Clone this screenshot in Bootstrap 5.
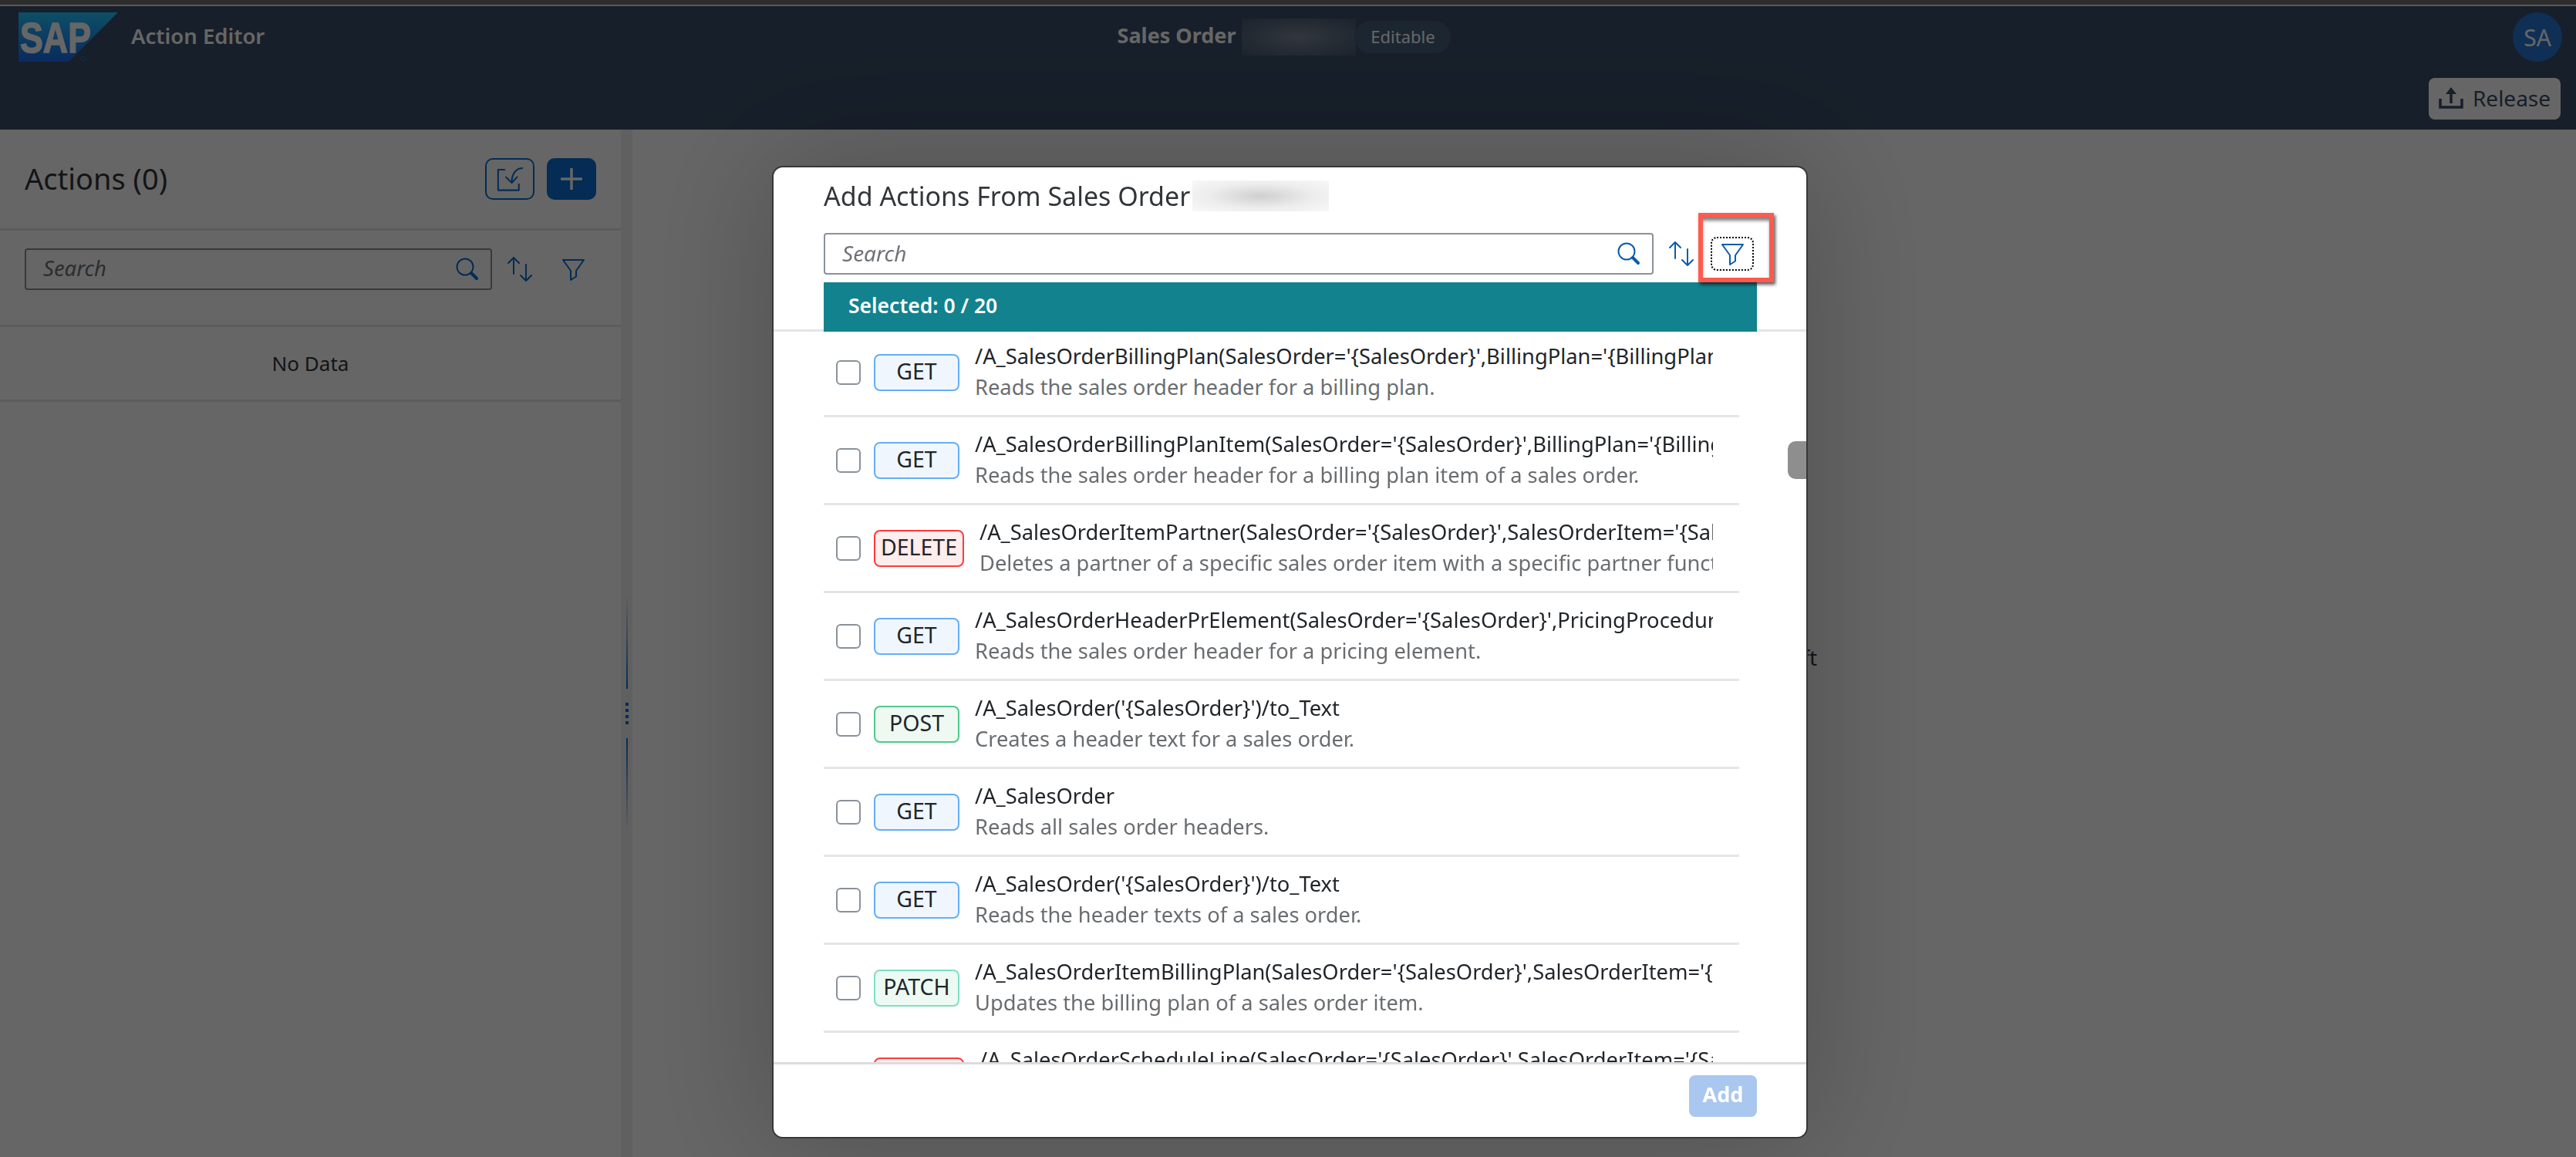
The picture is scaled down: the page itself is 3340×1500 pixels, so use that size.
<!DOCTYPE html>
<html>
  <head>
    <title>Action Editor</title>
    <link href="https://cdn.jsdelivr.net/npm/bootstrap@5.3.0/dist/css/bootstrap.min.css" rel="stylesheet" />
    <style>
      html, body { height: 100%; }
      body { font-family: "Noto Sans", "Liberation Sans", sans-serif; color: #32363a; overflow: hidden; background: #fff; }
      .top-strip { height: 8px; background: #707070; border-bottom: 2px solid #e0e0e0; }
      .shell-head { height: 160px; background: #3a4e69; color: #fff; padding: 8px 20px 0 24px; }
      .head-side { flex: 1 1 0; }
      .app-name { font-size: 27.500px; font-weight: 600; margin-left: 17px; padding-bottom: 3px; }
      .order-name { font-size: 27px; font-weight: 700; padding-bottom: 3px; }
      .head-mid { margin-right: 14px; }
      .blur-dark { width: 148px; height: 48px; margin: 0 -2px 0 8px; background: radial-gradient(ellipse at center, #7f8a98 0%, #5a6a80 60%, #45586f 100%); }
      .state-pill { height: 42px; width: 125px; border-radius: 21px; background: #485f7a; font-size: 22px; padding-bottom: 2px; }
      .avatar { width: 64px; height: 64px; background: #2676d4; font-size: 30px; margin-right: -2px; }
      .release-btn { width: 171px; height: 54px; margin-top: 21px; background: #fff; color: #3a4e69; font-size: 28px; padding: 0 0 3px; border: 0; border-radius: 8px; gap: 12px; }
      .release-btn:hover { background: #fff; color: #3a4e69; }

      .work-row { height: 1332px; }
      .side-pane { width: 805px; flex: none; }
      .pane-title { height: 131px; padding: 0 32px; border-bottom: 3px solid #e5e5e5; }
      .pane-title h2 { font-size: 38px; font-weight: 400; margin: 0; }
      .tool-btn { width: 64px; height: 54px; padding: 0; border: 2px solid #0a6ed1; border-radius: 10px; color: #0a6ed1; background: #fff; }
      .tool-btn-solid { background: #0a6ed1; border-color: #0a6ed1; color: #fff; }
      .pane-tools { height: 125px; padding: 23px 32px 0; border-bottom: 3px solid #e5e5e5; }
      .find-box { height: 54px; border: 2px solid #89919a; border-radius: 4px; background: #fff; padding: 0 15px 0 22px; }
      .find-box input { border: 0; outline: 0; flex: 1; min-width: 0; font-size: 27.500px; font-style: italic; background: transparent; padding: 0 0 3px; }
      .find-box input::placeholder { color: #6f7276; opacity: 1; }
      .blue-ico { color: #0a6ed1; flex: none; }
      .no-data { height: 97px; border-bottom: 3px solid #e5e5e5; font-size: 26px; }

      .split-bar { width: 15px; flex: none; background: #f0f1f2; padding-top: 602px; }
      .split-line { width: 2px; height: 123px; background: linear-gradient(to bottom, rgba(10,110,209,0), #0a6ed1); }
      .split-line-low { background: linear-gradient(to top, rgba(10,110,209,0), #0a6ed1); }
      .split-dots { gap: 4px; margin: 18px 0; }
      .split-dots i { display: block; width: 4px; height: 4px; background: #0a6ed1; }
      .center-note { font-size: 28px; padding-top: 36px; }
      .center-note span { width: 552px; text-align: right; white-space: nowrap; overflow: hidden; }

      .dim-layer { position: fixed; inset: 0; background: rgba(0, 0, 0, .6); }
      .act-dialog { position: fixed; left: 1003px; top: 217px; width: 1339px; height: 1257px; border-radius: 12px; background: #fff; overflow: hidden; box-shadow: 0 0 0 2px #383838; }
      .dialog-glow { position: fixed; left: 1003px; top: 217px; width: 1339px; height: 1257px; border-radius: 12px; box-shadow: 0 0 170px 10px rgba(0, 0, 0, .22); }
      .dialog-head { height: 213px; padding: 13px 64px 0 65px; border-bottom: 3px solid #e5e5e5; flex: none; }
      .dialog-head h3 { font-size: 34px; font-weight: 400; line-height: 48px; margin: 0; }
      .blur-light { width: 177px; height: 40px; margin-left: 3px; background: radial-gradient(ellipse at center, #cfcfcf 0%, #ededed 55%, #f8f8f8 100%); }
      .dialog-tools { margin-top: 24px; height: 54px; }
      .dialog-tools .find-box { flex: 1; padding: 0 15px 0 22px; }
      .dialog-tools input { font-size: 28px; }
      .funnel-focus { width: 56px; height: 44px; margin: 0 4px 0 21px; border: 2px dotted #000; border-radius: 8px; padding: 0; background: #fff; color: #0b5cab; }
      .sum-bar { height: 64px; margin-top: 10px; background: #12828f; color: #fff; font-size: 26.500px; font-weight: 600; padding: 0 0 3px 32px; margin-bottom: -3px; position: relative; }
      .list-wrap { flex: 1; min-height: 0; overflow: hidden; padding: 0 87px 0 65px; }
      .act-rows { margin-top: -3px; }
      .act-row { height: 114px; padding: 0 34px 0 16px; border: 0; border-bottom: 3px solid #e5e5e5; border-radius: 0; gap: 17px; flex: none; }
      .act-row .form-check-input { width: 32px; height: 32px; margin: 0; border: 2px solid #89919a; border-radius: 6px; flex: none; }
      .verb { width: 111px; height: 48px; flex: none; border: 2px solid; border-radius: 8px; font-size: 28.500px; margin-right: 3px; padding-bottom: 2px; }
      .verb-get { background: #f0f6fe; border-color: #64aef8; }
      .verb-post { background: #eef9f2; border-color: #4fc98a; }
      .verb-patch { background: #ecfaf3; border-color: #7fdfc0; }
      .verb-delete { width: 117px; background: #ffecec; border-color: #ff3b3b; }
      .act-text { min-width: 0; flex: 1; white-space: nowrap; overflow: hidden; }
      .act-path { font-size: 27.300px; line-height: 40px; margin-top: -2px; }
      .act-desc { font-size: 27.300px; line-height: 40px; color: #6a6d70; }
      .thumb { position: absolute; right: 0; top: 355px; width: 24px; height: 49px; background: #8e8e8e; border-radius: 10px 0 0 10px; }
      .dialog-foot { height: 97px; padding: 14px 64px 0 0; border-top: 3px solid #dcdcdc; flex: none; }
      .add-btn { width: 88px; height: 54px; padding: 0 0 3px; border: 0; border-radius: 8px; background: #a9c7ef; color: #fff; font-size: 27px; font-weight: 700; }
      .note-frame { position: absolute; left: 1199px; top: 59px; width: 98px; height: 90px; border: 6px solid #ff5a4f; box-shadow: 2px 3px 4px rgba(0, 0, 0, .65), inset 0 5px 4px -1px rgba(0, 0, 0, .5); }
    </style>
  </head>
  <body>
    <svg width="0" height="0" class="position-absolute">
      <symbol id="ico-search" viewBox="0 0 30 30"><circle cx="12" cy="12" r="10.5" fill="none" stroke="currentColor" stroke-width="2" /><path d="M20 20l7 7" stroke="currentColor" stroke-width="4" stroke-linecap="round" /></symbol>
      <symbol id="ico-sort" viewBox="0 0 34 34"><path d="M9 23V2M2 9l7-7 7 7M25 11v21M18 25l7 7 7-7" fill="none" stroke="currentColor" stroke-width="2" stroke-linecap="round" stroke-linejoin="round" /></symbol>
      <symbol id="ico-filter" viewBox="0 0 30 30"><path d="M2 3h27L19 17v7.500l-7 4.500V17z" fill="none" stroke="currentColor" stroke-width="2" stroke-linejoin="round" /></symbol>
    </svg>

    <div class="top-strip"></div>
    <header class="shell-head">
      <div class="d-flex align-items-center">
        <div class="head-side d-flex align-items-center">
          <svg width="129" height="64" viewBox="0 0 129 64">
            <defs><linearGradient id="sapFill" x1="0" y1="0" x2="0" y2="1"><stop offset="0" stop-color="#23c5ff" /><stop offset="1" stop-color="#196beb" /></linearGradient></defs>
            <polygon points="0,0 129,0 65,64 0,64" fill="url(#sapFill)" />
            <text x="2" y="52" font-family="Liberation Sans" font-weight="700" font-size="56" textLength="92" lengthAdjust="spacingAndGlyphs" fill="#fff" stroke="#fff" stroke-width="1.500">SAP</text>
            <circle cx="84" cy="60" r="3" fill="none" stroke="#2a6fc0" />
          </svg>
          <span class="app-name">Action Editor</span>
        </div>
        <div class="head-mid d-flex align-items-center">
          <span class="order-name">Sales Order</span>
          <div class="blur-dark"></div>
          <span class="state-pill d-flex align-items-center justify-content-center">Editable</span>
        </div>
        <div class="head-side d-flex justify-content-end">
          <span class="avatar rounded-circle d-flex align-items-center justify-content-center">SA</span>
        </div>
      </div>
      <div class="d-flex justify-content-end">
        <button class="btn release-btn d-flex align-items-center justify-content-center">
          <svg width="32" height="30" viewBox="0 0 32 30"><path d="M2 16v11h28V16" fill="none" stroke="currentColor" stroke-width="3.500" /><path d="M16 22V8" stroke="currentColor" stroke-width="3.500" /><path d="M9 10l7-9 7 9z" fill="currentColor" /></svg>
          Release
        </button>
      </div>
    </header>

    <div class="work-row d-flex">
      <aside class="side-pane">
        <div class="pane-title d-flex align-items-center justify-content-between">
          <h2>Actions (0)</h2>
          <div class="d-flex gap-3 me-0">
            <button class="btn tool-btn d-flex align-items-center justify-content-center">
              <svg width="36" height="33" viewBox="70 60 105 97"><path d="M105 72H78v78h79v-25" fill="none" stroke="currentColor" stroke-width="6" stroke-linejoin="round" /><path d="M170 66c-24 1-40 20-40 54M108 100l22 22 20-22" fill="none" stroke="currentColor" stroke-width="6" stroke-linecap="round" stroke-linejoin="round" /></svg>
            </button>
            <button class="btn tool-btn tool-btn-solid d-flex align-items-center justify-content-center">
              <svg width="28" height="28" viewBox="0 0 28 28"><path d="M14 1v26M1 14h26" stroke="currentColor" stroke-width="3.500" stroke-linecap="round" /></svg>
            </button>
          </div>
        </div>
        <div class="pane-tools d-flex align-items-start">
          <div class="find-box d-flex align-items-center" style="width:606px">
            <input type="text" placeholder="Search" />
            <svg class="blue-ico" width="30" height="30"><use href="#ico-search" /></svg>
          </div>
          <svg class="blue-ico" style="margin:10px 0 0 19px" width="34" height="34"><use href="#ico-sort" /></svg>
          <svg class="blue-ico" style="margin:12px 0 0 37px" width="30" height="30"><use href="#ico-filter" /></svg>
        </div>
        <div class="no-data d-flex align-items-center justify-content-center">No Data</div>
      </aside>

      <div class="split-bar d-flex flex-column align-items-center">
        <div class="split-line"></div>
        <div class="split-dots d-flex flex-column"><i></i><i></i><i></i><i></i></div>
        <div class="split-line split-line-low"></div>
      </div>

      <main class="flex-grow-1 d-flex align-items-center justify-content-center center-note">
        <span>Select an action from the list on the left</span>
      </main>
    </div>

    <div class="dim-layer"></div>
    <div class="dialog-glow"></div>

    <div class="act-dialog d-flex flex-column">
      <div class="dialog-head">
        <div class="d-flex align-items-center">
          <h3>Add Actions From Sales Order</h3>
          <div class="blur-light"></div>
        </div>
        <div class="dialog-tools d-flex align-items-center">
          <div class="find-box d-flex align-items-center">
            <input type="text" placeholder="Search" />
            <svg width="30" height="30" style="color:#0b5cab;flex:none"><use href="#ico-search" /></svg>
          </div>
          <svg width="34" height="34" style="color:#0b5cab;flex:none;margin-left:19px"><use href="#ico-sort" /></svg>
          <button class="btn funnel-focus d-flex align-items-center justify-content-center">
            <svg width="30" height="30"><use href="#ico-filter" /></svg>
          </button>
        </div>
        <div class="sum-bar d-flex align-items-center">Selected: 0 / 20</div>
      </div>

      <div class="list-wrap">
        <ul class="list-group act-rows">
          <li class="list-group-item act-row d-flex align-items-center">
            <input class="form-check-input" type="checkbox" />
            <span class="verb verb-get d-flex align-items-center justify-content-center">GET</span>
            <div class="act-text">
              <div class="act-path">/A_SalesOrderBillingPlan(SalesOrder='{SalesOrder}',BillingPlan='{BillingPlan}')</div>
              <div class="act-desc">Reads the sales order header for a billing plan.</div>
            </div>
          </li>
          <li class="list-group-item act-row d-flex align-items-center">
            <input class="form-check-input" type="checkbox" />
            <span class="verb verb-get d-flex align-items-center justify-content-center">GET</span>
            <div class="act-text">
              <div class="act-path">/A_SalesOrderBillingPlanItem(SalesOrder='{SalesOrder}',BillingPlan='{BillingPlan}')</div>
              <div class="act-desc">Reads the sales order header for a billing plan item of a sales order.</div>
            </div>
          </li>
          <li class="list-group-item act-row d-flex align-items-center">
            <input class="form-check-input" type="checkbox" />
            <span class="verb verb-delete d-flex align-items-center justify-content-center">DELETE</span>
            <div class="act-text">
              <div class="act-path">/A_SalesOrderItemPartner(SalesOrder='{SalesOrder}',SalesOrderItem='{SalesOrderItem}')</div>
              <div class="act-desc">Deletes a partner of a specific sales order item with a specific partner function.</div>
            </div>
          </li>
          <li class="list-group-item act-row d-flex align-items-center">
            <input class="form-check-input" type="checkbox" />
            <span class="verb verb-get d-flex align-items-center justify-content-center">GET</span>
            <div class="act-text">
              <div class="act-path">/A_SalesOrderHeaderPrElement(SalesOrder='{SalesOrder}',PricingProcedureStep='{Step}')</div>
              <div class="act-desc">Reads the sales order header for a pricing element.</div>
            </div>
          </li>
          <li class="list-group-item act-row d-flex align-items-center">
            <input class="form-check-input" type="checkbox" />
            <span class="verb verb-post d-flex align-items-center justify-content-center">POST</span>
            <div class="act-text">
              <div class="act-path">/A_SalesOrder('{SalesOrder}')/to_Text</div>
              <div class="act-desc">Creates a header text for a sales order.</div>
            </div>
          </li>
          <li class="list-group-item act-row d-flex align-items-center">
            <input class="form-check-input" type="checkbox" />
            <span class="verb verb-get d-flex align-items-center justify-content-center">GET</span>
            <div class="act-text">
              <div class="act-path">/A_SalesOrder</div>
              <div class="act-desc">Reads all sales order headers.</div>
            </div>
          </li>
          <li class="list-group-item act-row d-flex align-items-center">
            <input class="form-check-input" type="checkbox" />
            <span class="verb verb-get d-flex align-items-center justify-content-center">GET</span>
            <div class="act-text">
              <div class="act-path">/A_SalesOrder('{SalesOrder}')/to_Text</div>
              <div class="act-desc">Reads the header texts of a sales order.</div>
            </div>
          </li>
          <li class="list-group-item act-row d-flex align-items-center">
            <input class="form-check-input" type="checkbox" />
            <span class="verb verb-patch d-flex align-items-center justify-content-center">PATCH</span>
            <div class="act-text">
              <div class="act-path">/A_SalesOrderItemBillingPlan(SalesOrder='{SalesOrder}',SalesOrderItem='{SalesOrderItem}')</div>
              <div class="act-desc">Updates the billing plan of a sales order item.</div>
            </div>
          </li>
          <li class="list-group-item act-row d-flex align-items-center">
            <input class="form-check-input" type="checkbox" />
            <span class="verb verb-delete d-flex align-items-center justify-content-center">DELETE</span>
            <div class="act-text">
              <div class="act-path">/A_SalesOrderScheduleLine(SalesOrder='{SalesOrder}',SalesOrderItem='{SalesOrderItem}')</div>
              <div class="act-desc">Deletes a schedule line of a sales order item.</div>
            </div>
          </li>
        </ul>
      </div>

      <div class="thumb"></div>
      <div class="dialog-foot d-flex justify-content-end align-items-start">
        <button class="btn add-btn">Add</button>
      </div>
      <div class="note-frame"></div>
    </div>
  </body>
</html>
